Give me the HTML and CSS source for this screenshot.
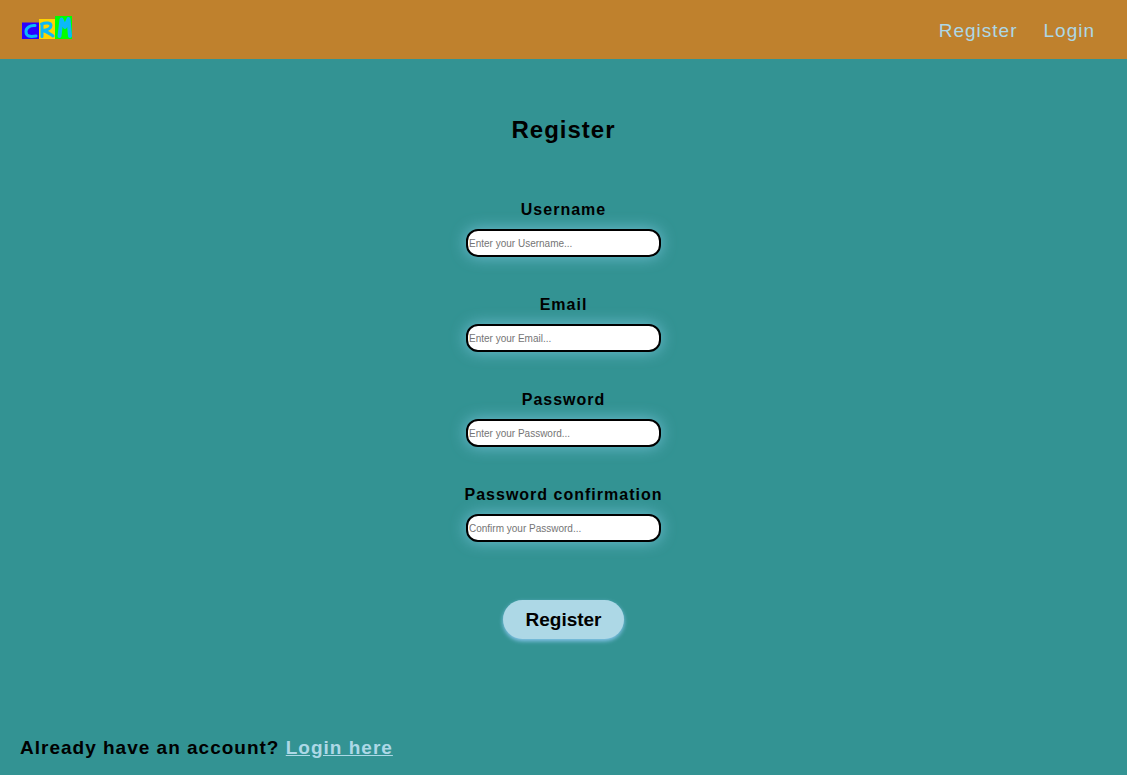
FILE: index.html
```html
<!DOCTYPE html>
<html lang="en">
<head>
<meta charset="utf-8">
<meta name="viewport" content="width=device-width, initial-scale=1">
<title>Register</title>
<link rel="stylesheet" href="styles.css">
</head>
<body>
<header class="navbar">
  <a class="brand" href="#" aria-label="CRM home">
    <svg class="logo" viewBox="0 0 52 24" aria-hidden="true">
      <rect x="0" y="6.500" width="17" height="16.500" fill="#2a00ff"/>
      <rect x="17" y="3" width="17" height="20" fill="#ffd400"/>
      <rect x="33" y="0" width="17" height="23" fill="#00ff00"/>
      <g fill="none" stroke="#0cb8f8" stroke-linecap="round" stroke-linejoin="round">
        <path stroke-width="3" d="M13 9.500C8 9 4 12 4 15.500C4 20.500 8 21 14 20"/>
        <path stroke-width="3" d="M20 20.500V8.500M19.500 8C24 6 29 7 29 9.500C29 12.500 25 14 21 14.500C25 15.500 28 18 31 20"/>
        <path stroke-width="4" d="M37.500 20L39.500 3.500L43 11L46.500 3L48 20"/>
      </g>
    </svg>
  </a>
  <nav class="nav-links">
    <a class="nav-link" href="#">Register</a>
    <a class="nav-link" href="#">Login</a>
  </nav>
</header>
<main class="page">
  <h1 class="title">Register</h1>
  <form class="form">
    <div class="field">
      <label class="label" for="username">Username</label>
      <input class="input" id="username" type="text" placeholder="Enter your Username...">
    </div>
    <div class="field">
      <label class="label" for="email">Email</label>
      <input class="input" id="email" type="email" placeholder="Enter your Email...">
    </div>
    <div class="field">
      <label class="label" for="password">Password</label>
      <input class="input" id="password" type="password" placeholder="Enter your Password...">
    </div>
    <div class="field">
      <label class="label" for="confirm">Password confirmation</label>
      <input class="input" id="confirm" type="password" placeholder="Confirm your Password...">
    </div>
    <button class="submit" type="submit">Register</button>
  </form>
  <p class="account">Already have an account? <a class="account-link" href="#">Login here</a></p>
</main>
</body>
</html>
```
FILE: styles.css
```css
* {
  box-sizing: border-box;
}

body {
  margin: 0;
  background: #339393;
  color: #000;
  font-family: "Liberation Sans", Arial, sans-serif;
  letter-spacing: 1px;
}

.navbar {
  display: flex;
  align-items: flex-start;
  justify-content: space-between;
  padding: 16px 32px 17px 22px;
  background: #bf812d;
}

.logo {
  display: block;
  width: 52px;
  height: 24px;
}

.nav-links {
  display: flex;
  gap: 26px;
  padding-top: 3px;
}

.nav-link {
  color: lightblue;
  font-size: 19px;
  line-height: 23px;
  text-decoration: none;
}

.page {
  padding: 57px 20px 15px;
}

.title {
  margin: 0 0 56px;
  font-size: 24px;
  line-height: 28px;
  text-align: center;
}

.form {
  display: flex;
  flex-direction: column;
  align-items: center;
}

.field {
  display: flex;
  flex-direction: column;
  align-items: center;
  gap: 9px;
  margin-bottom: 38px;
}

.label {
  font-size: 16px;
  font-weight: bold;
  line-height: 20px;
}

.input {
  width: 195px;
  height: 28px;
  padding: 1px;
  border: 2px solid #000;
  border-radius: 12px;
  background: #fff;
  box-shadow: 0 0 15px rgba(135, 206, 235, 0.7);
  font-family: inherit;
  font-size: 10px;
}

.submit {
  margin-top: 20px;
  padding: 8px 22px;
  border: 0;
  border-radius: 20px;
  background: lightblue;
  box-shadow: 0 2px 4px #8ac6ee;
  color: #000;
  font-family: inherit;
  font-size: 19px;
  font-weight: bold;
  line-height: 23px;
}

.account {
  margin: 97px 0 0;
  font-size: 19px;
  font-weight: bold;
  line-height: 24px;
}

.account-link {
  color: lightblue;
}
```
